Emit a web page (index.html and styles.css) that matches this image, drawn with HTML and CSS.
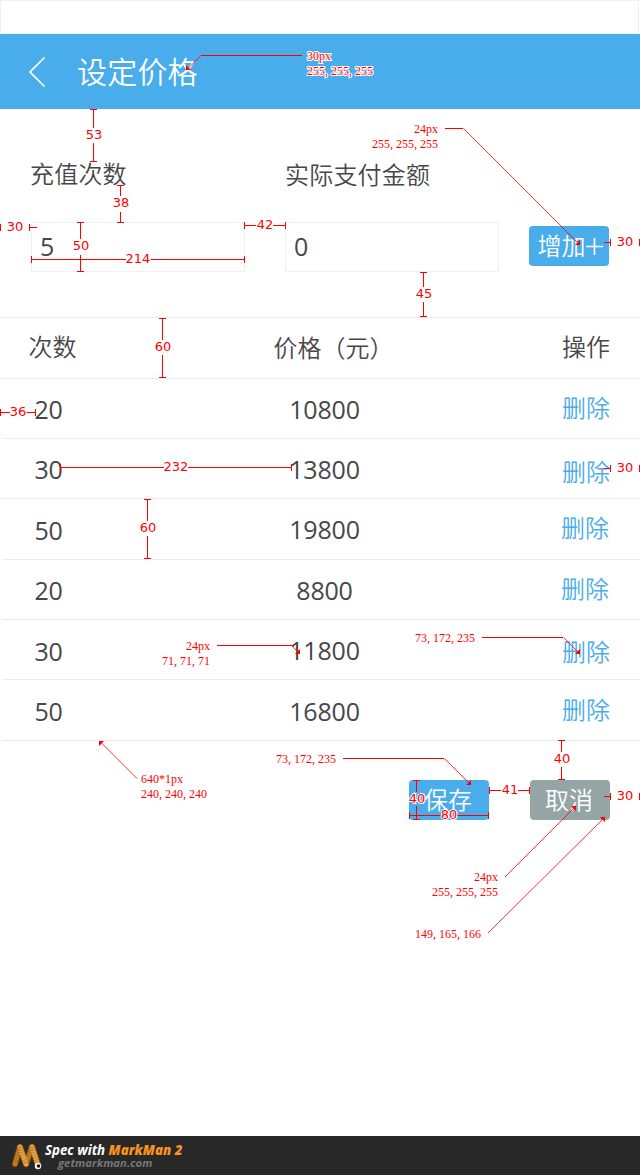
FILE: index.html
```html
<!DOCTYPE html>
<html lang="zh-CN">
<head>
<meta charset="utf-8">
<title>设定价格</title>
<link rel="stylesheet" href="styles.css">
</head>
<body>
<div class="page">
  <div class="statusbar"></div>
  <header class="header">
    <svg class="back" width="18" height="32" viewBox="0 0 18 32"><path d="M16.5 1.5 2 16 16.5 30.5" fill="none" stroke="#fff" stroke-width="1.7"/></svg>
    <h1 class="title">设定价格</h1>
  </header>

  <form class="form">
    <div class="field">
      <label class="label">充值次数</label>
      <div class="input">5</div>
    </div>
    <div class="field">
      <label class="label label-pay">实际支付金额</label>
      <div class="input">0</div>
    </div>
    <div class="btn btn-add">增加<svg width="17" height="17" viewBox="0 0 17 17"><path d="M0 8.5H17M8.5 0V17" stroke="#fff" stroke-width="1.7"/></svg></div>
  </form>

  <div class="table">
    <div class="row head"><span>次数</span><span class="price">价格<i class="paren" lang="zh-TW">（</i>元<i class="paren" lang="zh-TW">）</i></span><span>操作</span></div>
    <div class="row"><span class="num">20</span><span class="num price">10800</span><a class="del">删除</a></div>
    <div class="row short low"><span class="num">30</span><span class="num price">13800</span><a class="del">删除</a></div>
    <div class="row uneven"><span class="num">50</span><span class="num price">19800</span><a class="del left">删除</a></div>
    <div class="row short"><span class="num">20</span><span class="num price">8800</span><a class="del left">删除</a></div>
    <div class="row short uneven mid"><span class="num">30</span><span class="num price">11800</span><a class="del">删除</a></div>
    <div class="row last"><span class="num">50</span><span class="num price">16800</span><a class="del">删除</a></div>
  </div>

  <div class="actions">
    <div class="btn">保存</div>
    <div class="btn btn-cancel">取消</div>
  </div>

  <footer class="footer">
    <svg class="logo" width="32" height="28" viewBox="0 0 32 28">
      <g fill="none" stroke-linecap="round">
        <path d="M9 4 4 21M9 4 15 21M21 4 15 21M21 4 27 22" stroke="#80440b" stroke-width="6.4"/>
        <path d="M9 4 4 21M21 4 15 21" stroke="#c07c26" stroke-width="4.6"/>
        <path d="M9 4 15 21M21 4 27 22" stroke="#e5a64b" stroke-width="5"/>
        <path d="M9 4 4 21M9 4 15 21M21 4 15 21M21 4 27 22" stroke="#9a5a16" stroke-opacity=".6" stroke-width="4.6" stroke-linecap="butt" stroke-dasharray=".7 2"/>
      </g>
      <circle cx="27" cy="23" r="3.2" fill="#fff"/><circle cx="27.5" cy="23" r="1.8" fill="#111"/>
    </svg>
    <div class="credit">
      <div class="spec">Spec with <b>MarkMan 2</b></div>
      <div class="site">getmarkman.com</div>
    </div>
  </footer>

  <svg class="notes" width="640" height="1175" viewBox="0 0 640 1175">
    <g class="rule">
      <path d="M93.5 109V128M93.5 143V162M90 109.5h7M90 161.5h7"/>
      <path d="M120.5 185V196M120.5 212V222M117 185.5h7M117 222.5h7"/>
      <path d="M.5 224v7M29.5 224v7M29 227.5h8"/>
      <path d="M80.5 222V239M80.5 255V271M77 222.5h7M77 271.5h7"/>
      <path d="M31 259.5H126M150 259.5H245M31.5 256v7M244.5 256v7"/>
      <path d="M245 225.5H257M273 225.5H285M244.5 222v7M285.5 222v7"/>
      <path d="M423.5 272V287M423.5 302V316M420 272.5h7M420 316.5h7"/>
      <path d="M604 242.5h6M610.5 239v7M639.5 239v7"/>
      <path d="M162.5 318V340M162.5 355V377M159 318.5h7M159 377.5h7"/>
      <path d="M0 412.5H10M26 412.5H35M.5 409v7M35.5 409v7"/>
      <path d="M61 467.5H164M188 467.5H291M60.5 464v7M291.5 464v7"/>
      <path d="M604 468.5h6M610.5 465v7M639.5 465v7"/>
      <path d="M147.5 499V521M147.5 536V558M144 499.5h7M144 558.5h7"/>
      <path d="M561.5 741V752M561.5 767V779M558 740.5h7M558 779.5h7"/>
      <path d="M490 790.5H502M518 790.5H530M489.5 787v7M529.5 787v7"/>
      <path d="M604 796.5h6M610.5 793v7M639.5 793v7"/>
      <path d="M416.5 781V792M416.5 806V819M413 780.5h7M413 819.5h7"/>
      <path d="M410 815.5H441M457 815.5H488M409.5 812v7M488.5 812v7"/>
    </g>
    <g class="leader">
      <path d="M201 55.5H302M445 128.5H463M217 645.5H292M482 637.5H563M343 758.5H444"/>
    </g>
    <g class="slant">
      <path d="M201 55.5 187 69.5M463.5 128.5 579 244M291.5 645.5 299 653M563.5 637.5 579 653M444.5 758.5 470 784M137 778.5 100 741.5M505 877 575 807M488 933 604 818"/>
    </g>
    <g class="tip">
      <path d="M186 65V70H191ZM580 240V245H575ZM300 649V654H295ZM580 649V654H575ZM471 780V785H466ZM99 746V741H104ZM571 806H576V811ZM600 817H605V822Z"/>
    </g>
    <g class="measure">
      <text x="94" y="139">53</text><text x="121" y="207">38</text><text x="15" y="231">30</text>
      <text x="81" y="250">50</text><text x="138" y="263">214</text><text x="265" y="229">42</text>
      <text x="424" y="298">45</text><text x="625" y="246">30</text><text x="163" y="351">60</text>
      <text x="18" y="416">36</text><text x="176" y="471">232</text><text x="625" y="472">30</text>
      <text x="148" y="532">60</text><text x="562" y="763">40</text><text x="510" y="794">41</text>
      <text x="625" y="800">30</text><text x="417" y="803">40</text><text x="449" y="819">80</text>
    </g>
    <g class="spec-text">
      <text x="307" y="60">30px</text><text x="307" y="75">255, 255, 255</text>
      <text x="141" y="783">640*1px</text><text x="141" y="798">240, 240, 240</text>
      <text x="276" y="763">73, 172, 235</text><text x="415" y="642">73, 172, 235</text>
      <text x="415" y="938">149, 165, 166</text>
      <text x="414" y="133">24px</text><text x="372" y="148">255, 255, 255</text>
      <text x="186" y="650">24px</text><text x="162" y="665">71, 71, 71</text>
      <text x="474" y="881">24px</text><text x="432" y="896">255, 255, 255</text>
    </g>
  </svg>
</div>
</body>
</html>
```
FILE: styles.css
```css
* { box-sizing: border-box; }
body {
  margin: 0;
  background: #fff;
  color: #474747;
  font: 350 24px/30px "Noto Sans CJK SC DemiLight", "Noto Sans CJK SC", sans-serif;
}
.page {
  position: relative;
  display: flex;
  flex-direction: column;
  width: 640px;
  height: 1175px;
  overflow: hidden;
}
.statusbar { width: 639px; height: 34px; border: 1px solid #f0f0f0; }
.header {
  display: flex;
  align-items: flex-start;
  height: 75px;
  padding: 16px 0 0 28px;
  background: #49aceb;
  color: #fff;
}
.back { margin-top: 6px; }
.title { margin: 0 0 0 31px; font-size: 30px; line-height: 40px; font-weight: 350; letter-spacing: .2px; }

.form { display: flex; height: 208px; padding: 48px 31px 0; }
.field { display: flex; flex-direction: column; width: 214px; margin-right: 40px; }
.field + .field { margin-right: 30px; }
.label { height: 65px; margin-left: -1px; padding-top: 1px; letter-spacing: .2px; }
.label-pay { margin-left: 0; padding-top: 2px; }
.input {
  height: 50px;
  padding: 8px 0 0 8px;
  border: 1px solid #f0f0f0;
  font: 25px/30px "Open Sans", sans-serif;
}
.btn {
  display: flex;
  justify-content: center;
  width: 80px;
  height: 40px;
  padding: 4px 2px 0 0;
  border-radius: 4px;
  background: #49aceb;
  color: #fff;
}
.btn-add { margin-top: 69px; padding: 4px 0 0 2px; }
.btn-add svg { flex: none; margin-top: 8px; }
.btn-cancel { background: #95a5a6; }

.table { display: flex; flex-direction: column; }
.row {
  display: grid;
  grid-template-columns: 95px 1fr 78px;
  align-items: start;
  width: 638px;
  height: 61px;
  margin-left: 2px;
  padding: 15px 0 0 32.5px;
  border-bottom: 1px solid #ededed;
}
.row.short, .row:nth-child(2) { height: 60px; }
.row.head {
  height: 62px;
  margin-left: 0;
  padding: 13px 0 0 28.5px;
  border-top: 1px solid #ededed;
  grid-template-columns: 98px 1fr 76px;
}
.head .price { width: 130px; padding: 1px 0 0 4px; white-space: nowrap; }
.paren { font-family: "Noto Sans CJK TC DemiLight", "Noto Sans CJK TC", sans-serif; font-style: normal; }
.num { font: 25px/30px "Open Sans", sans-serif; letter-spacing: -.2px; }
.price { width: 118px; justify-self: start; margin-left: 143px; }
.num.price { margin-left: 136px; text-align: center; }
.del { margin-top: -2px; color: #49aceb; }
.del.left { margin-left: -1px; }
.low .del { margin-top: 2px; }
.mid .del { margin-top: 1px; }
.uneven .num:first-child { padding-top: 1px; }
.row.last { padding-top: 16px; }

.actions { display: flex; gap: 41px; padding: 39px 0 0 409px; }

.footer {
  display: flex;
  height: 39px;
  margin-top: auto;
  padding: 7px 0 0 11px;
  background: #282828;
  font: italic bold 13.3px/14px "Open Sans", sans-serif;
}
.credit { margin-left: 2px; }
.spec { color: #fff; }
.spec b { color: #f7931e; }
.site { padding-left: 13px; color: #777; font-size: 11.3px; line-height: 12px; }

/* Dimension marks drawn over the screen */
.notes { position: absolute; inset: 0; }
.rule path { stroke: #f00; fill: none; shape-rendering: crispEdges; }
.leader path { stroke: #f00; fill: none; }
.slant path { stroke: #f00; stroke-width: .8; fill: none; }
.tip path { fill: #f00; }
.measure, .spec-text { fill: #f00; stroke: #fff; stroke-width: 2px; paint-order: stroke; font-weight: 400; }
.measure { font-family: "DejaVu Sans", sans-serif; font-size: 13px; text-anchor: middle; }
.spec-text { font-family: "Liberation Serif", serif; font-size: 12px; }
```
